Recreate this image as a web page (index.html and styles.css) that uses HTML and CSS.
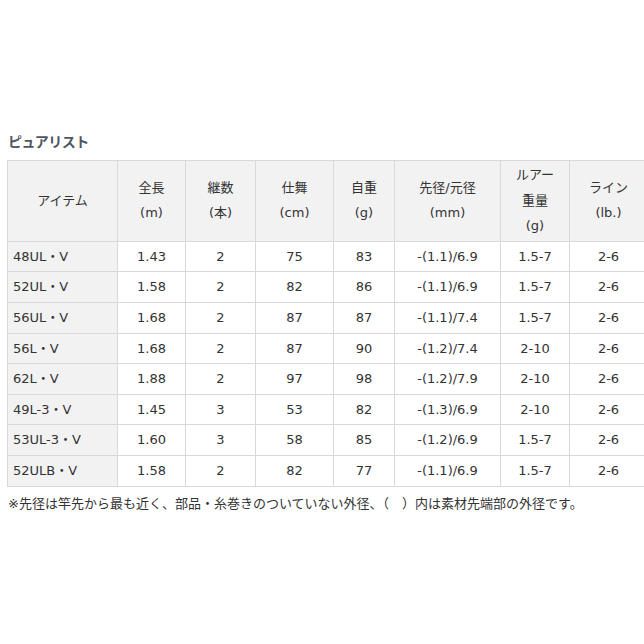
FILE: index.html
```html
<!DOCTYPE html>
<html lang="ja">
<head>
<meta charset="utf-8">
<link rel="stylesheet" href="styles.css">
</head>
<body>
<div class="page">
  <h2 class="title">ピュアリスト</h2>
  <table class="spec">
    <colgroup>
      <col class="c1"><col class="c2"><col class="c3"><col class="c4"><col class="c5"><col class="c6"><col class="c7"><col class="c8">
    </colgroup>
    <thead>
      <tr>
        <th>アイテム</th>
        <th>全長<br>(m)</th>
        <th>継数<br>(本)</th>
        <th>仕舞<br>(cm)</th>
        <th>自重<br>(g)</th>
        <th>先径/元径<br>(mm)</th>
        <th>ルアー<br>重量<br>(g)</th>
        <th>ライン<br>(lb.)</th>
      </tr>
    </thead>
    <tbody>
      <tr><td class="name">48UL・V</td><td>1.43</td><td>2</td><td>75</td><td>83</td><td>-(1.1)/6.9</td><td>1.5-7</td><td>2-6</td></tr>
      <tr><td class="name">52UL・V</td><td>1.58</td><td>2</td><td>82</td><td>86</td><td>-(1.1)/6.9</td><td>1.5-7</td><td>2-6</td></tr>
      <tr><td class="name">56UL・V</td><td>1.68</td><td>2</td><td>87</td><td>87</td><td>-(1.1)/7.4</td><td>1.5-7</td><td>2-6</td></tr>
      <tr><td class="name">56L・V</td><td>1.68</td><td>2</td><td>87</td><td>90</td><td>-(1.2)/7.4</td><td>2-10</td><td>2-6</td></tr>
      <tr><td class="name">62L・V</td><td>1.88</td><td>2</td><td>97</td><td>98</td><td>-(1.2)/7.9</td><td>2-10</td><td>2-6</td></tr>
      <tr><td class="name">49L-3・V</td><td>1.45</td><td>3</td><td>53</td><td>82</td><td>-(1.3)/6.9</td><td>2-10</td><td>2-6</td></tr>
      <tr><td class="name">53UL-3・V</td><td>1.60</td><td>3</td><td>58</td><td>85</td><td>-(1.2)/6.9</td><td>1.5-7</td><td>2-6</td></tr>
      <tr><td class="name">52ULB・V</td><td>1.58</td><td>2</td><td>82</td><td>77</td><td>-(1.1)/6.9</td><td>1.5-7</td><td>2-6</td></tr>
    </tbody>
  </table>
  <p class="note">※先径は竿先から最も近く、部品・糸巻きのついていない外径、（　）内は素材先端部の外径です。</p>
</div>
</body>
</html>
```

FILE: styles.css
```css
html, body {
  margin: 0;
  padding: 0;
  background: #ffffff;
}
body {
  font-family: "DejaVu Sans", "Noto Sans CJK JP", sans-serif;
  color: #333333;
  font-size: 13px;
}
.page {
  padding: 132px 0 0 7px;
}
.title {
  margin: 0 0 10px 1px;
  font-size: 14px;
  line-height: 18px;
  font-weight: bold;
  color: #4d5661;
  font-family: "Noto Sans CJK JP", sans-serif;
  letter-spacing: -0.5px;
}
.spec {
  border-collapse: collapse;
  table-layout: fixed;
  width: 640px;
}
.c1 { width: 110px; }
.c2 { width: 68px; }
.c3 { width: 70px; }
.c4 { width: 78px; }
.c5 { width: 61px; }
.c6 { width: 106px; }
.c7 { width: 69px; }
.c8 { width: 78px; }
.spec th, .spec td {
  border: 1px solid #d9d9d9;
  text-align: center;
  font-weight: normal;
  padding: 2px 4px;
  line-height: 25.6px;
  white-space: nowrap;
}
.spec th {
  background: #f2f2f2;
  padding: 1px 4px 2px;
}
.spec td.name {
  background: #f2f2f2;
  text-align: left;
  padding-left: 5px;
}
.note {
  margin: 8px 0 0 1px;
  font-size: 13px;
  line-height: 18px;
}
```
